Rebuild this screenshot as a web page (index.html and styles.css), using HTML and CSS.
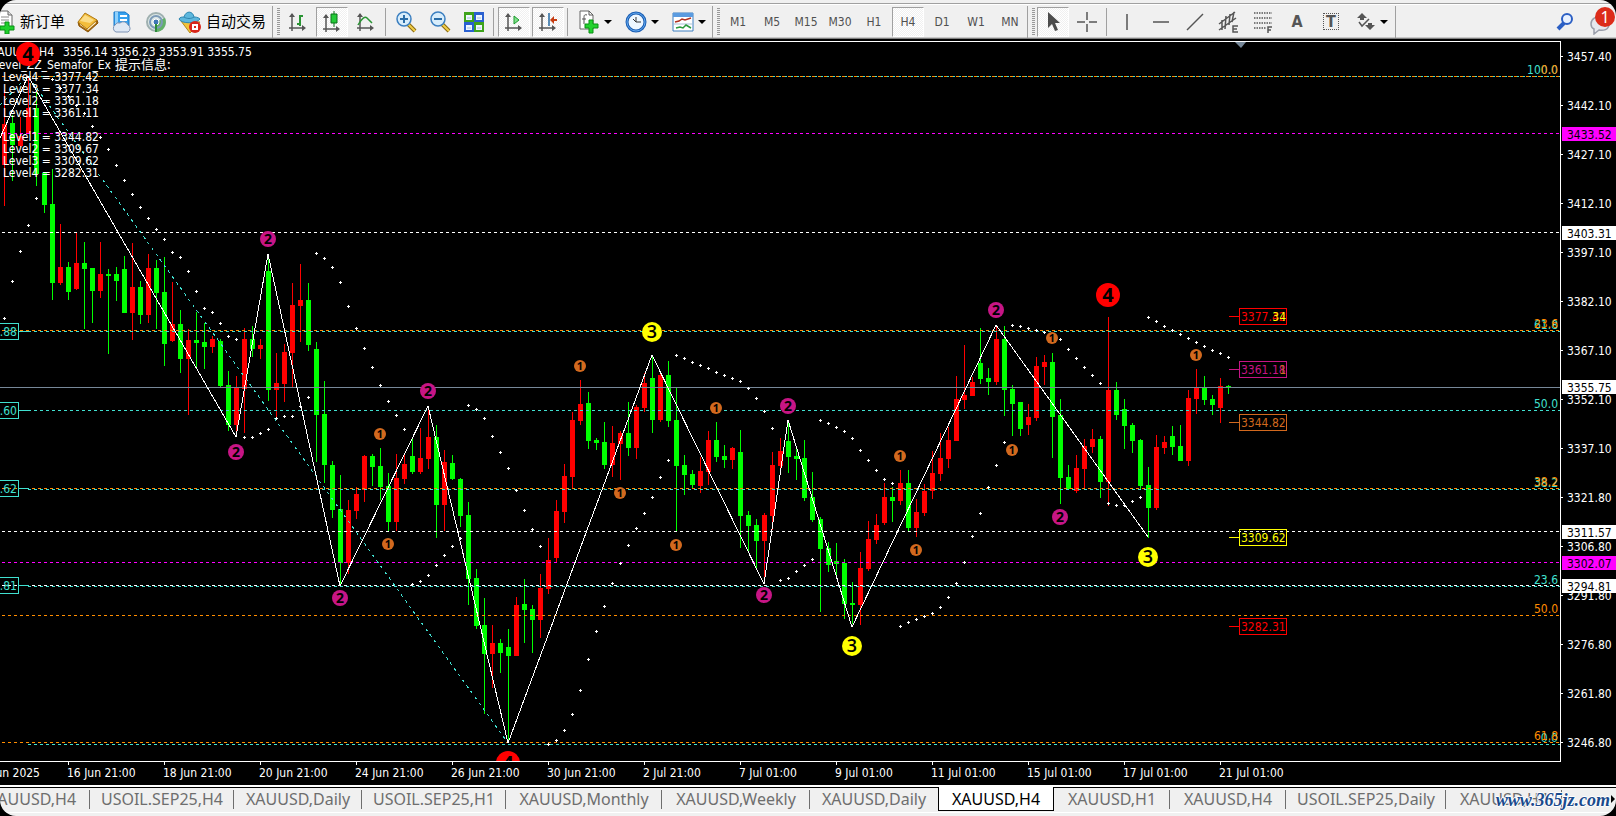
FILE: index.html
```html
<!DOCTYPE html>
<html lang="zh-CN">
<head>
<meta charset="utf-8">
<title>XAUUSD,H4</title>
<link rel="stylesheet" href="styles.css">
</head>
<body>
<div class="app">
  <header class="toolbar">
    <button class="btn btn-order"><svg width="22" height="24" viewBox="0 0 22 24"><path d="M5 1h9l4 4v13H5z" fill="#fff" stroke="#666"/><path d="M14 1v4h4" fill="#ddd" stroke="#666"/><path d="M7 7h8M7 10h8M7 13h5" stroke="#888"/><path d="M11 12h4v4h5v4h-5v4h-4v-4H6v-4h5z" fill="#1fd02c" stroke="#0a8f14"/></svg><span>新订单</span></button>
    <button class="btn" aria-label="Market"><svg width="22" height="22" viewBox="0 0 22 22"><path d="M1 11l1 4 9 6 10-9-1-3z" fill="#a8690c" stroke="#8a560a"/><path d="M3 14l8 5 8-7-1-2-8 7-7-5z" fill="#fff3cf"/><path d="M1 11L8 2l12 7-10 9z" fill="#f3bd3c" stroke="#b07a14"/><path d="M3 10l5-6 9 5-4 3z" fill="#fbdc86"/></svg></button>
    <button class="btn" aria-label="VPS"><svg width="22" height="22" viewBox="0 0 22 22"><path d="M3 1h11l4 3v11H3z" fill="#36a0ee" stroke="#1b78c8"/><path d="M4 1h3v12H4z" fill="#8fd0fb"/><path d="M9 4h7v2H9zM9 8h7v2H9z" fill="#fff"/><path d="M5 21a4 4 0 0 1-1-7 4 4 0 0 1 5-2 5 5 0 0 1 8 2 4 4 0 0 1 0 7z" fill="#dfe8f4" stroke="#7d92b4"/></svg></button>
    <button class="btn" aria-label="Signals"><svg width="22" height="22" viewBox="0 0 22 22" fill="none"><circle cx="11" cy="11" r="9" fill="#dde8e6" stroke="#9fb0b0" stroke-width="2"/><path d="M11 11v10a10 10 0 0 0 9-14z" fill="#62b168"/><circle cx="11" cy="11" r="6" stroke="#7d9bb8" stroke-width="2"/><circle cx="11" cy="11" r="3" fill="#3e75b5" stroke="#fff"/><path d="M11 13v8" stroke="#2d8c3a" stroke-width="2"/></svg></button>
    <button class="btn btn-auto"><svg width="24" height="24" viewBox="0 0 24 24"><path d="M3 11l9 12 10-11z" fill="#f2c33a" stroke="#b28718"/><path d="M1 9c2 5 18 5 21 0-2-2-5-2-6-2-1-6-8-7-10 0-2 0-4 0-5 2z" fill="#5db7dd" stroke="#2f86b0"/><path d="M6 7c3 2 7 2 10 0" stroke="#2f86b0" fill="none"/><circle cx="17" cy="17" r="6" fill="#d8261a"/><path d="M14 14h6v6h-6z" fill="#fff"/><path d="M16 16h2v2h-2z" fill="#d8261a"/></svg><span>自动交易</span></button>
    <span class="divider"></span>
    <button class="btn" aria-label="Bars"><svg width="20" height="22" viewBox="0 0 20 22" fill="none"><path d="M4 3v17M1 17h15" stroke="#555" stroke-width="1.5"/><path d="M1 6l3-4 3 4zM14 14l4 3-4 3z" fill="#555"/><path d="M12 4v11M12 5h3M9 13h3" stroke="#2a9434" stroke-width="2"/></svg></button>
    <button class="btn pressed" aria-label="Candles"><svg width="20" height="24" viewBox="0 0 20 24" fill="none"><path d="M4 5v17M1 19h15" stroke="#555" stroke-width="1.5"/><path d="M1 8l3-4 3 4zM14 16l4 3-4 3z" fill="#555"/><path d="M12 1v16" stroke="#087018"/><path d="M9 4h6v9H9z" fill="#24cb38" stroke="#087018"/></svg></button>
    <button class="btn" aria-label="Line"><svg width="20" height="22" viewBox="0 0 20 22" fill="none"><path d="M4 3v17M1 17h15" stroke="#555" stroke-width="1.5"/><path d="M1 6l3-4 3 4zM14 14l4 3-4 3z" fill="#555"/><path d="M2 14c4-7 7-9 9-7l5 5" stroke="#2a9434" stroke-width="1.5"/></svg></button>
    <span class="sep"></span>
    <button class="btn" aria-label="Zoom in"><svg width="22" height="22" viewBox="0 0 22 22"><path d="M13 13l7 7" stroke="#8c6a10" stroke-width="4"/><path d="M13 13l7 7" stroke="#f2cf49" stroke-width="2"/><circle cx="9" cy="8" r="7" fill="#d8edfb" stroke="#3b7fc0" stroke-width="1.5"/><path d="M9 4v8M5 8h8" stroke="#2a6da8" stroke-width="2"/></svg></button>
    <button class="btn" aria-label="Zoom out"><svg width="22" height="22" viewBox="0 0 22 22"><path d="M13 13l7 7" stroke="#8c6a10" stroke-width="4"/><path d="M13 13l7 7" stroke="#f2cf49" stroke-width="2"/><circle cx="9" cy="8" r="7" fill="#d8edfb" stroke="#3b7fc0" stroke-width="1.5"/><path d="M5 8h8" stroke="#2a6da8" stroke-width="2"/></svg></button>
    <button class="btn" aria-label="Tile"><svg width="22" height="22" viewBox="0 0 22 22"><path d="M1 1h10v10H1zM11 11h10v10H11z" fill="#3fa31c"/><path d="M11 1h10v10H11z" fill="#2a60d0"/><path d="M1 11h10v10H1z" fill="#2a60d0"/><path d="M3 4h6v5H3zM13 4h6v5h-6zM3 14h6v5H3zM13 14h6v5h-6z" fill="#eef6ff"/><path d="M4 7h4M14 7h4M4 17h4M14 17h4" stroke="#a9c2d8"/></svg></button>
    <span class="sep"></span>
    <button class="btn pressed" aria-label="Auto scroll"><svg width="20" height="22" viewBox="0 0 20 22"><path d="M4 3v17M1 17h15" stroke="#555" stroke-width="1.5"/><path d="M1 6l3-4 3 4zM14 14l4 3-4 3z" fill="#555"/><path d="M10 5v8l5-4z" fill="#7fe08a" stroke="#1c9a2c"/></svg></button>
    <button class="btn pressed" aria-label="Shift"><svg width="20" height="22" viewBox="0 0 20 22"><path d="M4 3v17M1 17h15" stroke="#555" stroke-width="1.5"/><path d="M1 6l3-4 3 4zM14 14l4 3-4 3z" fill="#555"/><path d="M11 2v13" stroke="#2469a0" stroke-width="1.5"/><path d="M12 9l4-4v3h3v2h-3v3z" fill="#c63d12"/></svg></button>
    <span class="sep"></span>
    <button class="btn btn-menu" aria-label="Indicators"><svg width="22" height="24" viewBox="0 0 22 24"><path d="M2 1h9l4 4v14H2z" fill="#fff" stroke="#666"/><path d="M11 1v4h4M9 5c-3-1-3 1-3 3v6M4 9h4" fill="none" stroke="#555"/><path d="M11 10h4v4h5v4h-5v5h-4v-5H7v-4h4z" fill="#22d22e" stroke="#0a8f14"/></svg><i class="caret"></i></button>
    <button class="btn btn-menu" aria-label="Periods"><svg width="22" height="22" viewBox="0 0 22 22"><circle cx="11" cy="11" r="9" fill="#eef7ff" stroke="#1c5fb4" stroke-width="3"/><circle cx="11" cy="11" r="9" fill="none" stroke="#62a8ee"/><path d="M11 6v5h5M11 11l-3-3" fill="none" stroke="#333"/></svg><i class="caret"></i></button>
    <button class="btn btn-menu" aria-label="Templates"><svg width="22" height="22" viewBox="0 0 22 22"><path d="M1 2h20v18H1z" fill="#fff" stroke="#3c7fc0" stroke-width="1"/><path d="M1 2h20v4H1z" fill="#5a9be0"/><path d="M3 11l4-1 3-2 3 1 6-2" fill="none" stroke="#b03020" stroke-width="1.5"/><path d="M2 13h18" stroke="#a9c2d8"/><path d="M4 17l4-1 3 1 3-3 5 3" fill="none" stroke="#2a9a3c" stroke-width="1.5"/></svg><i class="caret"></i></button>
    <span class="divider"></span>
    <button class="btn tf">M1</button><button class="btn tf">M5</button><button class="btn tf">M15</button><button class="btn tf">M30</button><button class="btn tf">H1</button><button class="btn tf pressed">H4</button><button class="btn tf">D1</button><button class="btn tf">W1</button><button class="btn tf">MN</button>
    <span class="divider"></span>
    <button class="btn pressed" aria-label="Cursor"><svg width="20" height="22" viewBox="0 0 20 22"><path d="M5 1v16l4-4 3 7 3-1-3-7h5z" fill="#4c4c4c"/></svg></button>
    <button class="btn" aria-label="Crosshair"><svg width="20" height="20" viewBox="0 0 20 20"><path d="M10 0v8M10 12v8M0 10h8M12 10h8" stroke="#555" stroke-width="1.5"/></svg></button>
    <span class="sep"></span>
    <button class="btn" aria-label="Vertical line"><svg width="20" height="20" viewBox="0 0 20 20"><path d="M10 2v16" stroke="#555" stroke-width="1.5"/></svg></button>
    <button class="btn" aria-label="Horizontal line"><svg width="20" height="20" viewBox="0 0 20 20"><path d="M2 10h16" stroke="#555" stroke-width="1.5"/></svg></button>
    <button class="btn" aria-label="Trend line"><svg width="20" height="20" viewBox="0 0 20 20"><path d="M2 18L18 2" stroke="#555" stroke-width="1.5"/></svg></button>
    <button class="btn" aria-label="Channel"><svg width="22" height="22" viewBox="0 0 22 22"><path d="M1 13L17 1M1 19L18 7M4 9v10M8 5l-1 13M12 3l-1 11M16 1l-2 10" fill="none" stroke="#555" stroke-width="1.5"/><path d="M20 15h-5v6h5M15 18h4" fill="none" stroke="#555" stroke-width="1.5"/></svg></button>
    <button class="btn" aria-label="Fibonacci"><svg width="22" height="22" viewBox="0 0 22 22"><path d="M2 2h18M2 7h18M2 12h18M2 17h12" stroke="#555" stroke-width="1.5" stroke-dasharray="1.5 1"/><path d="M20 16h-4v6M16 19h3" fill="none" stroke="#555" stroke-width="1.5"/></svg></button>
    <button class="btn glyph">A</button>
    <button class="btn glyph glyph-box"><span>T</span></button>
    <button class="btn btn-menu" aria-label="Arrows"><svg width="20" height="20" viewBox="0 0 20 20"><path d="M1 6l5-5 5 5-3 0v2H4V6zM9 13h3v-2h4v2h3l-5 5z" fill="#555"/><path d="M3 10l3 4 7-7" fill="none" stroke="#555" stroke-width="1.5"/></svg><i class="caret"></i></button>
    <span class="end-line"></span>
    <button class="btn search" aria-label="Search"><svg width="20" height="20" viewBox="0 0 20 20"><path d="M9 11l-6 6" stroke="#2b5fc4" stroke-width="4"/><circle cx="12" cy="7" r="5" fill="#e8f1ff" stroke="#2b5fc4" stroke-width="2"/></svg></button>
    <button class="btn chat" aria-label="Messages"><svg width="22" height="20" viewBox="0 0 22 20"><path d="M2 9c0-10 18-10 18 0 0 6-6 7-10 6l-5 4v-5c-2-1-3-3-3-5z" fill="#e6e8ee" stroke="#9a9eaa" stroke-width="1.5"/></svg><b class="badge">1</b></button>
  </header>

  <main class="chart">
    <svg id="plot" viewBox="0 39 1616 746" preserveAspectRatio="xMinYMin meet"></svg>
  </main>

  <footer class="tabs">
    <button class="tab w116">XAUUSD,H4</button><button class="tab w144">USOIL.SEP25,H4</button><button class="tab w128">XAUUSD,Daily</button><button class="tab w144">USOIL.SEP25,H1</button><button class="tab w156">XAUUSD,Monthly</button><button class="tab w148">XAUUSD,Weekly</button><button class="tab w128 last-before">XAUUSD,Daily</button><button class="tab w116 active">XAUUSD,H4</button><button class="tab w116">XAUUSD,H1</button><button class="tab w116">XAUUSD,H4</button><button class="tab w160">USOIL.SEP25,Daily</button><button class="tab w116">XAUUSD,H4</button>
    <span class="watermark">www.365jz.com</span>
    <i class="scroll-next"></i>
  </footer>
</div>
<script src="chart.js"></script>
</body>
</html>
```

FILE: styles.css
```css
* { box-sizing: border-box; }
html, body { height: 100%; }
body { margin: 0; background: #000; overflow: hidden; font-family: "DejaVu Sans Condensed", "DejaVu Sans", "Noto Sans CJK SC", sans-serif; }
.app { display: flex; flex-direction: column; height: 100vh; border-radius: 16px; overflow: hidden; background: #000; }
button { margin: 0; padding: 0; border: 0; background: none; font: inherit; color: inherit; }

.toolbar { flex: none; display: flex; align-items: center; height: 39px; padding-top: 4px; background: linear-gradient(#f0f0f0 0 3px, #a0a0a0 3px 4px, #fff 4px 5px, #f0f0f0 5px 37px, #c8c8c8 37px 38px, #808080 38px); }
.btn { flex: none; display: flex; align-items: center; justify-content: center; width: 34px; height: 30px; }
.btn svg { flex: none; }
.btn-order, .btn-auto { justify-content: flex-start; gap: 4px; font: 15px "Noto Sans CJK SC", sans-serif; color: #000; white-space: nowrap; }
.btn-order { width: 71px; }
.btn-order svg { margin-left: -6px; }
.btn-auto { width: 99px; padding-left: 5px; }
.btn-order span, .btn-auto span { margin-top: -2px; }
.btn-menu { width: 47px; gap: 4px; }
.pressed { width: 32px; margin: 0 1px; border: 1px solid; border-color: #a0a0a0 #fff #fff #a0a0a0; background: repeating-conic-gradient(#fff 0 25%, #f0f0f0 0 50%) 0 0 / 2px 2px; }
.caret { border: 4px solid transparent; border-top-color: #000; border-bottom: 0; }
.divider { flex: none; width: 9px; height: 32px; border-left: 1px solid #a0a0a0; background: repeating-linear-gradient(#999 0 1px, #f0f0f0 1px 2px) 4px 2px / 3px 28px no-repeat; }
.sep { flex: none; width: 1px; height: 28px; margin: 0 3px 0 2px; background: #a0a0a0; }
.tf { font-size: 12px; color: #505050; }
.glyph { font-size: 16px; font-weight: bold; color: #555; }
.glyph-box span { width: 16px; height: 17px; border: 1px dotted #555; line-height: 15px; text-align: center; }
.end-line { width: 1px; height: 32px; background: #a0a0a0; }
.search { margin-left: auto; }
.chat { position: relative; justify-content: flex-start; padding-left: 7px; padding-top: 6px; }
.badge { position: absolute; right: 1px; top: 0; width: 20px; height: 20px; border-radius: 50%; background: #dc2c1a; color: #fff; font: 16px/20px "Noto Sans", sans-serif; text-align: center; }

.chart { flex: 1; min-height: 0; }
.chart svg { display: block; width: 100%; height: 100%; font-size: 12px; }
.crisp { shape-rendering: crispEdges; }
.up { fill: #f00; }
.down { fill: #0f0; }
.line { fill: none; stroke-width: 1; }
.cjk { font-family: "Noto Sans CJK SC", sans-serif; font-size: 13px; }
.mark { text-anchor: middle; font-weight: bold; font-family: "Noto Sans", sans-serif; fill: #000; }
.mark-3 { font-weight: 600; font-family: "Open Sans", sans-serif; }

.tabs { position: relative; flex: none; display: flex; align-items: flex-start; height: 31px; border-top: 2px solid #fff; background: linear-gradient(#000 0 1px, #f0f0f0 1px 25px, #fff 25px 26px, #f0f0f0 26px); font: 16px "Noto Sans", sans-serif; color: #6e6e6e; overflow: hidden; }
.tab { position: relative; flex: none; height: 24px; line-height: 24px; text-align: center; white-space: nowrap; }
.tab:first-child { margin-left: -26px; }
.tab::after { content: ""; position: absolute; right: 0; top: 3px; width: 1px; height: 19px; background: #6e6e6e; }
.tab.last-before::after, .tab.active::after { display: none; }
.tab.active { border: 1px solid #000; border-top: 0; background: #fff; color: #000; }
.w116 { width: 116px; }
.w128 { width: 128px; }
.w144 { width: 144px; }
.w148 { width: 148px; }
.w156 { width: 156px; }
.w160 { width: 160px; }
.watermark { position: absolute; right: 6px; top: 2px; font: italic bold 18px/22px "Liberation Serif", serif; color: #1a4a8c; text-shadow: 1px 0 #fff, -1px 0 #fff, 0 1px #fff, 0 -1px #fff; }
.scroll-next { position: absolute; right: 1px; top: 8px; border: 4px solid transparent; border-left-color: #000; border-right: 0; }
```

FILE: chart.js
```js
const plot = document.getElementById('plot');
const TEAL = '#40e0d0', ORANGE = '#ff8c00', PINK = '#ff00ff', WHITE = '#ffffff';

// One row per bar: direction, high, low, body top, body bottom
const bars = `r 90 206 124 165|g 115 181 123 145|r 117 147 136 146|r 76 134 108 134|g 90 186 108 174|g 173 213 173 205|g 169 300 204 283|r 224 285 267 283|g 262 300 267 292|r 233 290 263 289|g 242 329 263 269|g 268 323 268 291|r 242 298 274 291|g 269 354 274 276|g 267 301 274 281|g 256 313 269 313|r 243 340 287 313|g 281 324 287 315|r 254 323 268 315|g 260 329 268 293|g 257 366 292 344|r 282 342 324 341|g 310 373 324 359|r 329 415 340 359|g 312 368 340 343|g 323 369 342 347|r 336 353 339 347|g 339 387 341 386|g 371 431 385 425|r 376 437 388 425|r 328 433 339 389|g 326 357 339 349|r 339 359 345 349|g 254 401 271 390|r 353 418 383 390|r 344 402 352 384|r 283 388 305 353|r 264 342 300 306|g 283 351 300 345|g 342 462 349 415|g 381 483 414 465|g 461 518 465 510|g 475 586 509 563|r 500 574 510 563|r 487 519 494 511|r 455 502 456 490|g 454 486 456 467|g 448 500 466 487|g 473 531 486 522|r 454 531 478 522|r 453 484 464 479|g 439 474 456 472|r 428 474 458 472|r 408 469 437 459|g 425 538 437 505|r 450 531 462 505|g 455 480 463 479|g 478 527 479 516|g 502 605 515 579|g 569 629 578 626|g 598 714 625 654|r 625 688 643 654|g 639 673 643 653|g 629 742 647 656|r 597 656 605 656|g 579 643 604 610|g 605 653 609 620|r 574 638 588 620|r 538 594 560 589|r 500 563 511 558|r 464 523 476 512|r 412 489 420 477|r 380 425 404 421|g 392 449 403 441|g 438 450 440 443|g 422 469 442 465|r 426 477 443 465|r 431 480 433 444|g 402 456 433 448|r 405 459 407 448|r 373 412 383 408|g 357 433 378 420|r 373 422 375 420|g 361 427 375 421|g 388 531 420 466|g 455 495 465 475|g 470 488 474 485|r 457 493 471 486|r 431 485 440 472|g 422 462 440 457|g 445 468 456 460|r 447 469 448 460|g 430 548 452 516|g 511 553 515 526|g 519 568 525 541|r 513 580 515 541|r 452 530 465 516|r 438 473 451 466|g 422 473 441 457|g 448 480 456 459|g 440 501 458 498|g 472 522 497 520|g 517 612 519 549|g 542 572 548 565|g 543 579 561 564|g 559 619 563 604|g 582 624 603 605|r 552 625 568 605|r 521 571 539 569|r 514 544 525 540|r 483 525 497 523|g 487 522 497 501|r 470 505 483 501|g 470 532 483 528|r 499 537 512 528|r 484 516 491 513|r 451 499 473 491|r 433 481 458 474|r 427 468 440 459|r 376 441 399 441|r 345 409 395 400|r 377 396 382 396|g 328 384 363 379|g 368 395 378 382|r 327 385 339 382|g 326 416 339 390|g 385 436 389 404|g 402 436 402 429|r 404 435 417 425|r 357 421 366 418|r 355 385 362 367|g 353 458 362 417|g 399 504 415 478|g 465 490 477 489|r 455 493 468 491|r 439 489 446 469|r 429 453 439 447|g 436 498 439 482|r 317 506 390 482|g 382 420 390 415|g 399 449 409 426|g 423 453 425 441|g 439 490 440 486|g 467 538 485 508|r 435 510 447 508|r 436 454 442 448|g 426 455 436 447|g 425 461 446 461|r 390 466 398 461|r 369 414 387 399|g 376 405 387 400|g 395 415 399 405|r 378 423 386 408|g 385 394 386 388`.split('|').map(s => s.split(' '));

// Parabolic runs: first x, then one y for every following bar
const runs = [
  [52, 79, 88, 96, 105, 113, 126, 137, 149, 165, 180, 194, 207, 218, 229, 239, 252, 257, 271, 291, 308, 312, 323, 336, 339],
  [4, 318, 281, 251, 225, 198],
  [244, 437, 437, 433, 429, 418, 416, 416, 406, 397],
  [316, 253, 258, 267, 282, 306, 328, 348, 367, 385, 401, 415, 429],
  [412, 584, 581, 575, 565, 555, 546, 538],
  [468, 405, 409, 418, 436, 452, 468, 490, 510, 529, 546],
  [548, 744, 740, 730, 714, 690, 659, 631, 606, 583, 563, 545, 528, 513, 497, 477, 460],
  [676, 355, 358, 362, 365, 368, 372, 375, 378, 381, 388, 398, 411, 428],
  [780, 580, 578, 571, 565, 559],
  [820, 420, 423, 427, 431, 438, 450, 460, 470, 479, 483],
  [900, 626, 622, 619, 616, 613, 607, 597, 583, 562, 536, 513, 487, 465, 442],
  [1012, 325, 326, 328, 330, 332, 335, 339, 349, 358, 367, 375, 383],
  [1108, 503, 505, 505, 501, 497],
  [1148, 317, 321, 326, 330, 334, 338, 342, 346, 350, 353, 357]
];

// Horizontal levels: y, colour, first x
const levels = [
  [76, TEAL, 28], [76, ORANGE, 2], [133, PINK, 2], [232, WHITE, 2], [331, TEAL, 28], [330, ORANGE, 2],
  [410, TEAL, 28], [489, TEAL, 28], [488, ORANGE, 2], [531, WHITE, 2], [562, PINK, 2],
  [586, TEAL, 28], [585, WHITE, 2], [615, ORANGE, 2], [742, ORANGE, 2], [744, TEAL, 28]
];

const marks = {
  1: { r: 6, color: '#d2691e', size: 11, at: [[380, 434], [388, 544], [580, 366], [620, 493], [676, 545], [716, 408], [900, 456], [916, 550], [1012, 450], [1052, 338], [1196, 355]] },
  2: { r: 8, color: '#c71585', size: 14, at: [[268, 239], [236, 452], [340, 598], [428, 391], [788, 406], [764, 595], [996, 310], [1060, 517]] },
  3: { r: 10, color: '#ffff00', size: 18, at: [[652, 332], [852, 646], [1148, 557]] },
  4: { r: 12, color: '#ff0000', size: 20, at: [[28, 54], [1108, 295], [508, 763]] }
};

let out = '<clipPath id="area"><path d="M0 41h1560v720H0z"/></clipPath>';
const text = (x, y, s, fill = WHITE, anchor = 'start') =>
  `<text x="${x}" y="${y}" fill="${fill}" text-anchor="${anchor}">${s}</text>`;
const path = (d, stroke, extra = '') => `<path class="line" d="${d}" stroke="${stroke}" ${extra}/>`;

out += '<g class="crisp">';
bars.forEach(([dir, hi, lo, top, bottom], i) => {
  const x = 4 + i * 8;
  out += `<path class="${dir === 'r' ? 'up' : 'down'}" d="M${x} ${hi}h1V${lo}h-1zM${x - 2} ${top}h5V${bottom}h-5z"/>`;
});
out += path('M0 387.5H1560', '#778899');
levels.forEach(([y, color, x]) => { out += path(`M${x} ${y}.5H1560`, color, 'stroke-dasharray="3 3"'); });
out += path('M0 105L28 76L508 743', TEAL, 'stroke-dasharray="3 4"');
out += path('M0 138L28 76L236 437L268 254L340 586L428 406L508 743L652 355L764 584L788 420L852 627L996 325L1148 537', WHITE);
runs.forEach(([x0, ...ys]) => ys.forEach((y, i) => {
  const x = x0 + i * 8;
  out += `<path fill="#fff" d="M${x - 1} ${y}h3v1h-3zM${x} ${y - 1}h1v3h-1z"/>`;
}));
out += '</g>';

out += text(54, 56, 'XAUUSD,H4', WHITE, 'end') + text(63, 56, '3356.14 3356.23 3353.91 3355.75');
out += text(111, 69, 'Level_ZZ_Semafor_Ex', WHITE, 'end') + '<text class="cjk" x="115" y="69" fill="#fff">提示信息:</text>';
[[81, 'Level4 = 3377.42'], [93, 'Level3 = 3377.34'], [105, 'Level2 = 3361.18'], [117, 'Level1 = 3361.11'], [141, 'Level1 = 3344.82'], [153, 'Level2 = 3309.67'], [165, 'Level3 = 3309.62'], [177, 'Level4 = 3282.31']]
  .forEach(([y, s]) => { out += text(3, y, s); });

out += '<g clip-path="url(#area)">';
Object.entries(marks).forEach(([n, m]) => m.at.forEach(([x, y]) => {
  out += `<circle cx="${x}" cy="${y}" r="${m.r}" fill="${m.color}"/><text class="mark mark-${n}" x="${x}" y="${y + Math.round(m.size * 0.36)}" font-size="${m.size}">${n}</text>`;
}));
out += '</g>';

[[331, '3372.88'], [410, '3348.60'], [488, '3324.62'], [585, '3294.81']].forEach(([y, s]) => {
  out += `<path class="line crisp" stroke="${TEAL}" d="M0 ${y - 7.5}H18.5V${y + 8.5}H0M19 ${y + 0.5}h10"/>` + text(17, y + 5, s, TEAL, 'end');
});

[[316, '3377.42', '#f00'], [369, '3361.18', '#c71585'], [422, '3344.82', '#d2691e'], [537, '3309.62', '#ff0'], [626, '3282.31', '#f00']].forEach(([y, s, c]) => {
  out += `<path class="line crisp" stroke="${c}" d="M1229 ${y + 0.5}h10M1239.5 ${y - 7.5}h47v16h-47z"/>` + text(1241, y + 5, s, c);
});
out += text(1286, 321, '34', '#ff0', 'end') + text(1286, 374, '1', '#d2691e', 'end');

[[74, '100.0', TEAL], [74, '0.0', ORANGE], [329, '61.8', TEAL], [328, '23.6', ORANGE], [408, '50.0', TEAL], [487, '38.2', TEAL], [486, '38.2', ORANGE], [584, '23.6', TEAL], [613, '50.0', ORANGE], [742, '0.0', TEAL], [740, '61.8', ORANGE]]
  .forEach(([y, s, c]) => { out += text(1558, y, s, c, 'end'); });

out += '<path class="line crisp" stroke="#fff" d="M0 41.5H1560.5V761.5H0"/><path fill="#778899" d="M1235 42h11l-5 6z"/>';
['3457.40', '3442.10', '3427.10', '3412.10', '3397.10', '3382.10', '3367.10', '3352.10', '3337.10', '3321.80', '3306.80', '3291.80', '3276.80', '3261.80', '3246.80'].forEach((s, i) => {
  const y = 56 + i * 49;
  out += path(`M1561 ${y}.5h2`, WHITE) + text(1567, y + 5, s);
});
[[127, '3433.52', PINK], [226, '3403.31', WHITE], [380, '3355.75', WHITE], [525, '3311.57', WHITE], [556, '3302.07', PINK], [579, '3294.81', WHITE]].forEach(([y, s, c]) => {
  out += `<path fill="${c}" d="M1562 ${y}h54v14h-54z"/>` + text(1567, y + 12, s, '#000');
});

out += text(40, 777, '12 Jun 2025', WHITE, 'end');
['16 Jun 21:00', '18 Jun 21:00', '20 Jun 21:00', '24 Jun 21:00', '26 Jun 21:00', '30 Jun 21:00', '2 Jul 21:00', '7 Jul 01:00', '9 Jul 01:00', '11 Jul 01:00', '15 Jul 01:00', '17 Jul 01:00', '21 Jul 01:00'].forEach((s, i) => {
  const x = 68 + i * 96;
  out += path(`M${x}.5 762v3`, WHITE) + text(x - 1, 777, s);
});

plot.innerHTML = out;
```
